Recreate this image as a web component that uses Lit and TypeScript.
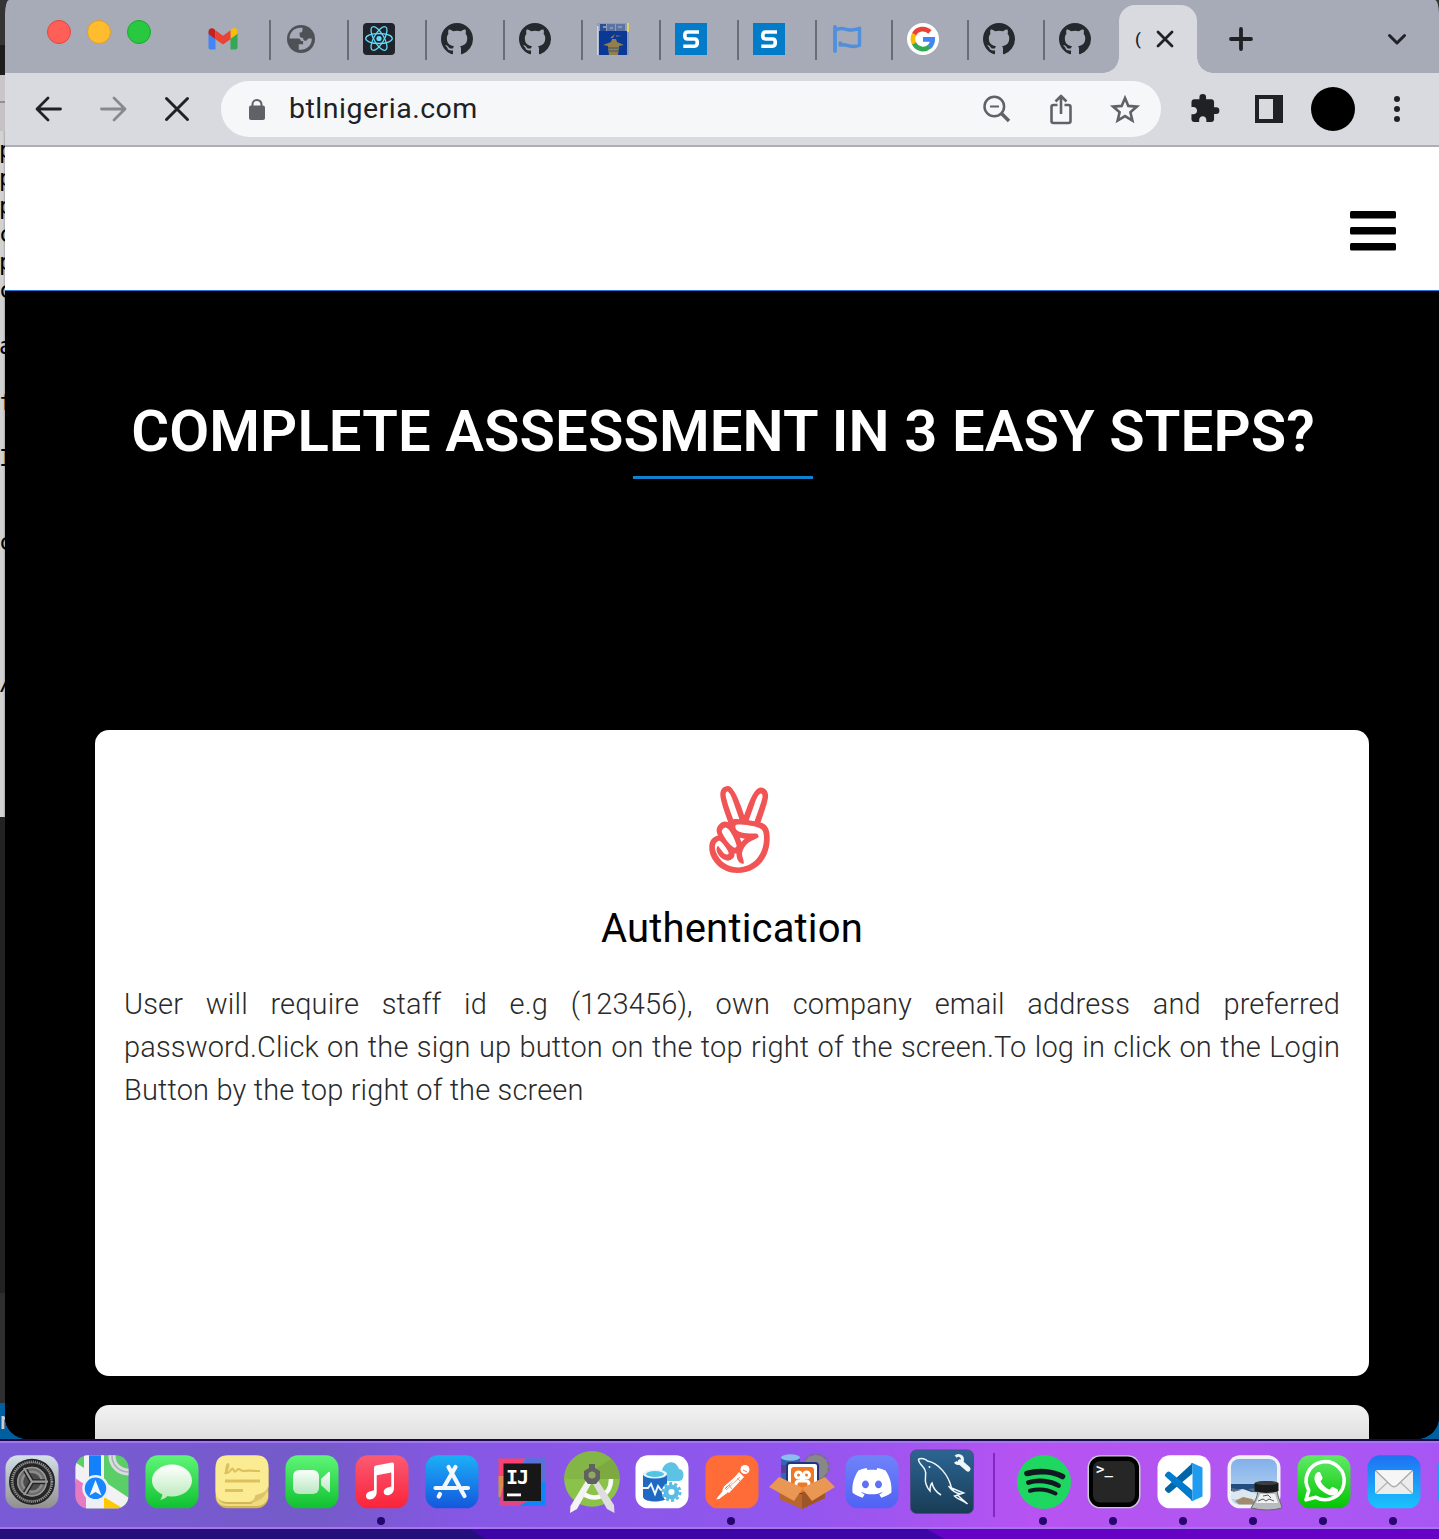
import { LitElement, html, svg, css } from "lit";
import { customElement, property } from "lit/decorators.js";

const GITHUB = svg`<path fill="#24292e" transform="scale(2)" d="M8 0C3.58 0 0 3.58 0 8c0 3.54 2.29 6.53 5.47 7.59.4.07.55-.17.55-.38 0-.19-.01-.82-.01-1.49-2.01.37-2.53-.49-2.69-.94-.09-.23-.48-.94-.82-1.13-.28-.15-.68-.52-.01-.53.63-.01 1.08.58 1.23.82.72 1.21 1.87.87 2.33.66.07-.52.28-.87.51-1.07-1.78-.2-3.64-.89-3.64-3.95 0-.87.31-1.59.82-2.15-.08-.2-.36-1.02.08-2.12 0 0 .67-.21 2.2.82.64-.18 1.32-.27 2-.27s1.36.09 2 .27c1.53-1.04 2.2-.82 2.2-.82.44 1.1.16 1.92.08 2.12.51.56.82 1.27.82 2.15 0 3.07-1.87 3.75-3.65 3.95.29.25.54.73.54 1.48 0 1.07-.01 1.93-.01 2.2 0 .21.15.46.55.38A8.01 8.01 0 0 0 16 8c0-4.42-3.58-8-8-8z"/>`;

const FAVICONS: Record<string, unknown> = {
  gmail: svg`
    <path fill="#4285f4" d="M1.5 10v14.500q0 2 2 2h5V14z"/>
    <path fill="#34a853" d="M23.500 14v12.500h5q2 0 2-2V10z"/>
    <path fill="#fbbc04" d="M23.500 8v8l7-5.200V8.500c0-3.300-3.500-4.300-5.700-2.500z"/>
    <path fill="#c5221f" d="M1.500 8.500V11l7 5.200V8L7.200 6C5 4.300 1.500 5.500 1.500 8.500z"/>
    <path fill="#ea4335" d="M8.500 16.200V7.200L16 12.800l7.500-5.600v9L16 21.500z"/>`,
  globe: svg`
    <circle cx="16" cy="16" r="14" fill="#4e5156"/>
    <path fill="#a7abb7" d="M17.500 4.800c-9-.8-13 5.400-12.900 10.600h9.100c1.900 0 1.500 2.600 3.200 2.600h1.200v3.200h-4.600v5.200c6.500 1.300 13.500-3 13.300-11h-3.200c-1.200 0-1.200 2.400-3 2.400-2.400 0-2.400-1.600-2.400-2.800-2.400 0-3.600-1.200-3.600-3V9.400h1.400c1.700 0 1.500-2.600 1.500-4.600z"/>
    <path fill="#4e5156" d="M4.500 18h6c1 0 1.300 1 1.300 2.200 0 1 .8 1.400 1.700 1.400v5.400C8 26 5 22.500 4.500 18z"/>`,
  react: svg`
    <rect width="32" height="32" rx="4" fill="#20232a"/>
    <g fill="none" stroke="#61dafb" stroke-width="1.300">
      <ellipse cx="16" cy="15.500" rx="13.300" ry="5"/>
      <ellipse cx="16" cy="15.500" rx="13.300" ry="5" transform="rotate(60 16 15.500)"/>
      <ellipse cx="16" cy="15.500" rx="13.300" ry="5" transform="rotate(120 16 15.500)"/>
    </g><circle cx="16" cy="15.500" r="2.600" fill="#61dafb"/>`,
  github: GITHUB,
  crest: svg`
    <rect width="32" height="32" fill="#8d9cba"/><rect x="2" y="8" width="28" height="24" fill="#0b3795"/>
    <path fill="#2f4f94" d="M3 1h6v7H3z"/><path fill="#5c74a4" d="M10 1h8v7h-8zM19 1h9v7h-9z"/><path fill="#8795b5" d="M6 3h3v2H6zM13 4h3v2h-3zM21 3h4v2h-4z"/>
    <path fill="#e6d257" d="M30 0h2v9h-2z"/><path fill="#c9d4e8" d="M0 3h1.500v29H0z"/>
    <path fill="#927f4b" d="M6 22l8-3 1-3h4l1 3 7 3-5 1v2l-1 7H12l-1-7v-2zM13 15l5-4-2 4z"/><path fill="#4f6291" d="M19 12l6 1-6 1z"/>
    <path stroke="#3f5473" d="M11 25h12M12 28h10"/>`,
  s: svg`
    <rect width="32" height="32" fill="#027bc9"/>
    <path fill="none" stroke="#fff" stroke-width="3.600" d="M24 9H12.500Q9.800 9 9.800 12.500T12.500 16H19.500Q22.300 16 22.300 19.600T19.500 23.200H8.300"/>`,
  flag: svg`
    <g fill="none" stroke="#4f8fde" stroke-linejoin="round"><path stroke-width="3.800" stroke-linecap="round" d="M4 4v24"/>
    <path stroke-width="3.400" d="M5 7c6-4 11 .8 16 0 3-.4 5-.9 7.500-1.700v16.900c-5 2.500-8.500 1.300-12 .3-2.700-.9-5-1-7.300-.4v-3.500"/></g>`,
  google: svg`
    <circle cx="16" cy="16" r="16" fill="#fff"/>
    <g fill="none" stroke-width="4.700"><path stroke="#ea4335" d="M7 11.400A10 10 0 0 1 22.900 9"/><path stroke="#fbbc05" d="M7.200 20.800A10 10 0 0 1 7.200 11.200"/>
    <path stroke="#34a853" d="M22.700 23.500A10 10 0 0 1 7.100 20.500"/><path stroke="#4285f4" d="M16 16.300h9.700c0 3-1 5.500-3.200 7.400"/></g>`,
};

const TABS: Array<{ icon: string; narrow?: boolean }> = [
  { icon: "gmail" }, { icon: "globe" }, { icon: "react" }, { icon: "github" },
  { icon: "github" }, { icon: "crest" }, { icon: "s" }, { icon: "s" },
  { icon: "flag", narrow: true }, { icon: "google", narrow: true },
  { icon: "github", narrow: true }, { icon: "github", narrow: true },
];

const tile = (fill: string) => svg`<rect x="8.500" y="14.300" width="53" height="53" rx="12.500" fill=${fill}/>`;
const grad = (id: string, a: string, b: string) => svg`<linearGradient id=${id} x2="0" y2="1"><stop stop-color=${a}/><stop offset="1" stop-color=${b}/></linearGradient>`;

const APPS: Record<string, unknown> = {
  settings: svg`
    <defs>${grad("set", "#d3e0e8", "#918f8e")}</defs>${tile("url(#set)")}
    <circle cx="35" cy="40.700" r="22" fill="#555"/>
    <circle cx="35" cy="40.700" r="21.500" fill="none" stroke="#222" stroke-width="3"/>
    <circle cx="35" cy="40.700" r="20" fill="none" stroke="#9a9a9a" stroke-width="2.500" stroke-dasharray="1 1.100"/>
    <circle cx="35" cy="40.700" r="16.600" fill="#6d6d6d" stroke="#252525" stroke-width="3.400"/>
    <circle cx="35" cy="40.700" r="10" fill="#4c4c4c" stroke="#8b8b8b" stroke-width="2.400"/>
    <g stroke="#242424" stroke-width="5"><path d="M35 40.700h16M35 40.700L27 27M35 40.700L27 54"/></g>
    <g stroke="#9c9c9c" stroke-width="2.200"><path d="M35 40.700h16M35 40.700L27 27M35 40.700L27 54"/></g>
    <circle cx="35" cy="40.700" r="14.200" fill="none" stroke="#999" stroke-width="1.500"/>`,
  maps: svg`
    <clipPath id="mc">${tile("#fff")}</clipPath><g clip-path="url(#mc)">
    <path fill="#5bcf67" d="M8 14h54v54H8z"/><path fill="#f2f2f4" d="M8 21l54 36v11H20L8 40z"/>
    <path fill="#e87ac2" d="M8 37l12 8v23H8z"/><path fill="#eeeef4" d="M19 45h18v23H19z"/><path fill="#ffc800" d="M37 56l20 12H37z"/>
    <path fill="#f2f2f4" d="M17 14h20v27H17z"/><path fill="#1580fb" d="M22 14h12v30H22z"/>
    <circle cx="61" cy="15" r="16" fill="none" stroke="#d9dbe1" stroke-width="7"/><circle cx="61" cy="15" r="16" fill="none" stroke="#a8b0b7" stroke-width="1.500"/>
    </g><circle cx="28.500" cy="47.300" r="12" fill="#1786ff" stroke="#e9f1f7" stroke-width="2.500"/>
    <path fill="#f4f8fb" d="M28.500 39l6 15.500-6-3.500-6 3.500z"/>`,
  messages: svg`
    <defs>${grad("grn", "#5ff578", "#10c130")}${grad("bub", "#ffffff", "#b7eab8")}</defs>${tile("url(#grn)")}
    <path fill="url(#bub)" d="M35 23.500c11 0 20 7 20 16s-9 16-20 16c-1.500 0-3-.1-4.500-.5-2 2.300-4 3.200-7.500 3.800 1.600-1.600 2.300-3.200 2.300-5.500C19 50.500 15 45.500 15 39.500c0-9 9-16 20-16z"/>`,
  notes: svg`
    <rect x="8.500" y="17" width="53" height="50.300" rx="12" fill="#d0b456"/><path fill="#f0dc7d" d="M9 50q1 13 12 13h23l17-13v7q-3 8-12 8H21Q10 65 9 56z"/>
    <path fill="#fbec94" d="M21 14.300h28q12.500 0 12.500 12.500V45c-1 8-9 16-18 16H21Q8.500 61 8.500 49V27Q8.500 14.300 21 14.300z"/>
    <path fill="#dcc46a" d="M61.500 44c-2 7-5 8-13 10-1 5-4 7-9 7.500 12 1 21-6 22-17.500z"/>
    <g stroke="#dcc15e" fill="none" stroke-width="2.800"><path d="M18 40h35M18 49.500h18"/><path stroke-width="2.200" d="M18 33c3-5 4-10 3-10s-3 9-1 9c3 0 5-6 6-4s2 4 4 1 4 2 7 1 4-.3 16 0"/></g>`,
  facetime: svg`
    <defs>${grad("ftb", "#5ff578", "#10c130")}${grad("ft", "#f9fffa", "#b9e7c0")}</defs>${tile("url(#ftb)")}
    <rect x="16" y="29" width="26" height="24" rx="6" fill="url(#ft)"/><path fill="url(#ft)" d="M44 38l7.500-7q1.500-1 1.500 1v18q0 2-1.500 1L44 44z"/>`,
  music: svg`
    <defs>${grad("mus", "#fb5b74", "#fa2339")}</defs>${tile("url(#mus)")}
    <path fill="#fff" d="M27 27q0-2 2-2.400l16-3q2-.3 2 1.500V47c0 8-10 9.500-10.300 4 0-4 5-4.700 7.600-5.500V31.500L29.700 34.300V51c0 8-10.500 10-10.700 4 0-4.500 5.500-4.700 8-5.700z"/>`,
  appstore: svg`
    <defs>${grad("as", "#1cb0f6", "#1357dd")}</defs>${tile("url(#as)")}
    <g stroke="#f3f8fd" stroke-width="4.200" stroke-linecap="round"><path d="M38.500 26L27 46M31.500 26L47.500 55M18.500 47h21M46 47h5M23 53l-1.300 2.500"/></g>`,
  intellij: svg`
    <path fill="#4d7be0" d="M11.500 17.500h47V65h-47z"/>
    <path fill="#fc4071" d="M11.500 17.500h27L22 41H11.500z"/><path fill="#5871d8" d="M38 17.500h20.500V44H48z"/><path fill="#0e86fb" d="M30 65l15-24h13.500v24z"/>
    <path fill="#d98a52" d="M11.500 35H20v21h-8.500z"/><path fill="#e34387" d="M16 46h22l4 14-11 5H11.500z"/>
    <rect x="16.500" y="22.500" width="37.500" height="37.500" fill="#171717"/><rect x="20" y="52.500" width="14" height="2.800" fill="#fff"/>
    <text x="19" y="43" class="ij">IJ</text>`,
  studio: svg`
    <circle cx="35" cy="38" r="27.800" fill="#8bc34a"/><path fill="#7caa41" d="M7.200 38a27.800 27.800 0 0 1 55.600 0z"/><path fill="#84b547" d="M7.200 38a27.800 27.800 0 0 1 47-20L35 30v8z"/>
    <path d="M54 38c0 21-22 22-29 13" fill="none" stroke="#fafafa" stroke-width="4.500"/>
    <path fill="#f3f3f3" d="M30 38l5 3-15 27-7 4 .5-7z"/><path fill="#dedede" d="M40 38l-5 3 15 27 7.500 4-.5-8z"/>
    <path fill="#616161" d="M32 23h6v4l5 3v8l-4 5h-8l-4-5v-8l5-3z"/><circle cx="35" cy="34" r="3.600" fill="#8fa961"/>`,
  azure: svg`
    ${tile("#fff")}
    <path fill="#5cc3e4" d="M34 40c-5-1-5-9 1-10 1-9 13-13 17-2 6 0 6 12 0 12z"/>
    <path fill="#1f69c3" d="M16 32v24c1 6 23 6 24 0V32z"/><ellipse cx="28" cy="33" rx="12" ry="4.500" fill="#e9f5fb"/><ellipse cx="28" cy="33" rx="9" ry="3" fill="#50c6e4"/>
    <path d="M16 47h5l3-4 4 10 3-8 3 4h5" fill="none" stroke="#eef6ff" stroke-width="2"/>
    <circle cx="44.500" cy="51" r="8.800" fill="none" stroke="#fff" stroke-width="2"/><circle cx="44.500" cy="51" r="8.500" fill="none" stroke="#58bce5" stroke-width="2.800" stroke-dasharray="3 2.340"/><circle cx="44.500" cy="51" r="5.300" fill="#fff" stroke="#58bce5" stroke-width="4.500"/>`,
  postman: svg`
    ${tile("#ff6c37")}
    <circle cx="48" cy="28.500" r="4.500" fill="#fff"/><path d="M46 29l4 2" stroke="#ff6c37"/>
    <path fill="#fff" d="M42 31l5 5-15 16-5-3zM28 47l3 4-9 7-3 .5z"/><path stroke="#fff" stroke-width="2" d="M43 33L28 46l-2 4M30 51l-9 6"/>
    <path stroke="#ff6c37" stroke-width=".7" d="M43 36L29 49M40 37l3 3M32 44l3 4"/>`,
  xampp: svg`
    <rect x="14" y="14" width="19" height="25" rx="5" fill="#3265b4"/><ellipse cx="23.500" cy="16.500" rx="9.500" ry="3.300" fill="#8abcec"/><path fill="#5c3c9b" d="M14 24h19v8H14z"/>
    <circle cx="49" cy="26" r="12" fill="none" stroke="#71737a" stroke-width="3.500" stroke-dasharray="4 2.300"/><circle cx="49" cy="26" r="8" fill="none" stroke="#888" stroke-width="8"/>
    <rect x="20" y="22" width="31" height="31" rx="3" fill="#fff" stroke="#23337e" stroke-width="2"/>
    <rect x="24" y="26" width="23" height="26" rx="3" fill="#ed7825"/>
    <g fill="none" stroke="#fff" stroke-width="3"><circle cx="31.500" cy="34" r="3"/><circle cx="39.500" cy="34" r="3"/><path d="M33 37h5M29 46v-3q0-3 3-3h7q3 0 3 3v3"/></g>
    <path fill="#b8662d" d="M12 47l23 6 23-6v10L35 68 12 58z"/><path fill="#9e5527" d="M35 51l23-4v10L35 68z"/>
    <path fill="#e99753" d="M2 46l10-10 24 11-9 13zM68 46L58 36 35 47l10 13z"/>`,
  discord: svg`
    <defs>${grad("dis", "#7083fa", "#5062f4")}</defs>${tile("url(#dis)")}
    <path fill="#fff" transform="translate(15.400 22.300) scale(1.630)" d="M20.317 4.3698a19.7913 19.7913 0 00-4.8851-1.5152.0741.0741 0 00-.0785.0371c-.211.3753-.4447.8648-.6083 1.2495-1.8447-.2762-3.68-.2762-5.4868 0-.1636-.3933-.4058-.8742-.6177-1.2495a.077.077 0 00-.0785-.037 19.7363 19.7363 0 00-4.8852 1.515.0699.0699 0 00-.0321.0277C.5334 9.0458-.319 13.5799.0992 18.0578a.0824.0824 0 00.0312.0561c2.0528 1.5076 4.0413 2.4228 5.9929 3.0294a.0777.0777 0 00.0842-.0276c.4616-.6304.8731-1.2952 1.226-1.9942a.076.076 0 00-.0416-.1057c-.6528-.2476-1.2743-.5495-1.8722-.8923a.077.077 0 01-.0076-.1277c.1258-.0943.2517-.1923.3718-.2914a.0743.0743 0 01.0776-.0105c3.9278 1.7933 8.18 1.7933 12.0614 0a.0739.0739 0 01.0785.0095c.1202.099.246.1981.3728.2924a.077.077 0 01-.0066.1276 12.2986 12.2986 0 01-1.873.8914.0766.0766 0 00-.0407.1067c.3604.698.7719 1.3628 1.225 1.9932a.076.076 0 00.0842.0286c1.961-.6067 3.9495-1.5219 6.0023-3.0294a.077.077 0 00.0313-.0552c.5004-5.177-.8382-9.6739-3.5485-13.6604a.061.061 0 00-.0312-.0286zM8.02 15.3312c-1.1825 0-2.1569-1.0857-2.1569-2.419 0-1.3332.9555-2.4189 2.157-2.4189 1.2108 0 2.1757 1.0952 2.1568 2.419 0 1.3332-.9555 2.4189-2.1569 2.4189zm7.9748 0c-1.1825 0-2.1569-1.0857-2.1569-2.419 0-1.3332.9554-2.4189 2.1569-2.4189 1.2108 0 2.1757 1.0952 2.1568 2.419 0 1.3332-.946 2.4189-2.1568 2.4189Z"/>`,
  mysql: svg`
    <defs>${grad("sql", "#2c6593", "#193c55")}</defs>
    <rect x="3.500" y="9" width="63" height="63.500" rx="6" fill="url(#sql)" stroke="#4b4c86"/>
    <path d="M11.500 18c3-1.500 7 0 9 2 11 2 21 14 24 27l12 5-6 2 10 9c-4-4-9-4-13-8l6-2c-6-1-9-4-12-8M11.500 18c0 5 5 7 6.500 11 2 4-1 9 1 14 1 3 2 5 4 7 0-3 0-6 2-8 1 5 4 9 9 12" fill="none" stroke="#f0f7fb" stroke-width="1.500"/>
    <circle cx="22.500" cy="26" r="1" fill="#f0f7fb"/>
    <path d="M53 21l8 7" stroke="#f0f7fb" stroke-width="5" stroke-linecap="round"/><circle cx="51.500" cy="18.500" r="4" fill="none" stroke="#f0f7fb" stroke-width="3" stroke-dasharray="19 6" transform="rotate(-135 51.500 18.500)"/>`,
  spotify: svg`
    <circle cx="35" cy="41" r="27" fill="#1ed760"/><g fill="none" stroke="#101820" stroke-linecap="round">
    <path stroke-width="5.600" d="M18 32.500c12-3.500 26-2 35.500 3"/><path stroke-width="4.800" d="M19.500 41.500c10-3 22-1.500 30 3"/><path stroke-width="4" d="M21 49.700c9-2.300 18-1.300 25.500 2.800"/></g>`,
  terminal: svg`
    ${tile("#c6cdd0")}<rect x="10" y="15.500" width="50" height="50.500" rx="11.500" fill="#000"/><rect x="14" y="20" width="42" height="41.500" rx="7" fill="#262626"/>
    <text x="17" y="33" class="term">&gt;_</text>`,
  vscode: svg`
    ${tile("#fff")}
    <path fill="#0065a9" d="M43.500 22v10.500L21 51.500q-1.500 1-3-.3l-1.600-1.600q-1.200-1.300 0-2.600z"/>
    <path fill="#007acc" d="M43.500 60V49.500L21 31q-1.500-1-3 .2l-1.600 1.700q-1.200 1.200 0 2.500z"/>
    <path fill="#1f9cf0" d="M43.500 22l10 4.500V55.500L43.500 60q-1 .3-2-.5 2 .2 2-2V25q0-2.300-2-2.200 1-1 2-.8z"/>`,
  preview: svg`
    <defs>${grad("sky", "#83b0ea", "#bdd9f2")}</defs>${tile("#f1f2f5")}
    <rect x="12" y="18" width="46" height="45.500" rx="8" fill="url(#sky)"/><path fill="#244c7e" d="M12 43h46v8H12z"/><path fill="#dce7ef" d="M12 50l12-2 14 5 20-3v8H12z"/><path fill="#5a7289" d="M12 47l10 2-8 2zM29 48l9-1-3 4z"/><path fill="#a08b70" d="M16 60l8-4 9 2 5 5.500H20z"/>
    <path fill="#b9bcbe" stroke="#666" d="M39 50h19c1 7 4 12 5 17q-14 4-31 0c4-6 6-10 7-17z"/><path fill="#f0f1f1" d="M41 53h15l3 9H37z"/>
    <path d="M44 55l5-1 3 3M39 60l5-2 3 2 3-2 5 2" stroke="#555" fill="none"/><path fill="#191a1b" d="M35.500 42q12-4 24 0v8q-12 4-24 0z"/><ellipse cx="47.500" cy="42" rx="11.500" ry="2" fill="#3c3d3e"/>`,
  whatsapp: svg`
    <defs>${grad("wa", "#61ea68", "#03c500")}</defs>${tile("url(#wa)")}
    <path fill="none" stroke="#fff" stroke-width="3.600" stroke-linejoin="round" d="M17 58.800l2.800-9.500a19 19 0 1 1 7.200 7z"/>
    <path fill="#fff" d="M27.500 32c1.200-1.200 3.500-1.200 4 0l2 4.700c.4 1-1 2.300-2 3.500 2 4 5 6.700 9 8.300 1.400-1 2-3 3.500-2.500l4.500 2.200c1 .7.500 3-.5 4.300-2 2.200-5.500 2.500-9 1-7-3-12-8.500-13.300-14-.7-3 0-5.700 1.800-7.500z"/>`,
  mail: svg`
    <defs>${grad("ml", "#2070f2", "#19c4fd")}</defs>${tile("url(#ml)")}
    <rect x="16" y="29" width="38" height="24" rx="2.500" fill="#ececec"/><path d="M17 52l13-12M53 52L40 40" stroke="#b4b4b4" stroke-width="1.200"/><path d="M17 30l15 14.500q3 2.500 6 0L53 30" fill="#f6f6f6" stroke="#a9a9a9" stroke-width="1.300"/>`,
  partial: svg`${tile("#1d9bf5")}`,
};

const DOCK_LEFT: Array<[string, boolean]> = [
  ["settings", false], ["maps", false], ["messages", false], ["notes", false], ["facetime", false],
  ["music", true], ["appstore", false], ["intellij", false], ["studio", false], ["azure", false],
  ["postman", true], ["xampp", false], ["discord", false], ["mysql", false],
];
const DOCK_RIGHT: Array<[string, boolean]> = [
  ["spotify", true], ["terminal", true], ["vscode", true], ["preview", true], ["whatsapp", true], ["mail", true], ["partial", false],
];

@customElement("browser-tabs")
class BrowserTabs extends LitElement {
  static styles = css`
    :host { display: flex; height: 73px; background: #a7abb7; }
    .lights { display: flex; gap: 16px; width: 144px; padding: 20px 0 0 42px; }
    .light { width: 24px; height: 24px; border-radius: 50%; box-sizing: border-box; border: 1px solid; }
    .red { background: #ff5f57; border-color: #e1483f; }
    .amber { background: #febc2e; border-color: #dfa023; }
    .green { background: #28c840; border-color: #1aab29; }
    .tab { box-sizing: border-box; width: 78px; height: 40px; margin-top: 20px; padding: 3px 0 0 14px; border-left: 2px solid #6a6d73; }
    .tab.narrow { width: 76px; }
    .tab.first { border-color: transparent; }
    svg { display: block; }
    .active { position: relative; display: flex; align-items: center; box-sizing: border-box; width: 78px; height: 68px; margin-top: 5px; padding-left: 16px; background: #d9dadf; border-radius: 16px 16px 0 0; }
    .active::before, .active::after { content: ""; position: absolute; bottom: 0; width: 16px; height: 16px; }
    .active::before { left: -16px; background: radial-gradient(circle at 0 0, transparent 15.5px, #d9dadf 16px); }
    .active::after { right: -16px; background: radial-gradient(circle at 100% 0, transparent 15.5px, #d9dadf 16px); }
    .title { width: 6px; overflow: hidden; font: 500 17px/30px Roboto, sans-serif; color: #202124; margin-right: 7px; }
    .plus { margin: 25px 0 0 30px; }
    .chev { margin: 29px 30px 0 auto; }
  `;
  render() {
    return html`
      <div class="lights"><span class="light red"></span><span class="light amber"></span><span class="light green"></span></div>
      ${TABS.map((t, i) => html`<div class="tab ${t.narrow ? "narrow" : ""} ${i === 0 ? "first" : ""}"><svg width="32" height="32">${FAVICONS[t.icon]}</svg></div>`)}
      <div class="active"><span class="title">(</span>
        <svg width="34" height="34" fill="none" stroke="#202124" stroke-width="2.8" stroke-linecap="round"><path d="M10 10l14 14M24 10L10 24"/></svg>
      </div>
      <svg class="plus" width="28" height="28" fill="none" stroke="#202124" stroke-width="3.800" stroke-linecap="round"><path d="M14 4v20M4 14h20"/></svg>
      <svg class="chev" width="24" height="20" fill="none" stroke="#202124" stroke-width="3" stroke-linecap="round" stroke-linejoin="round"><path d="M4.500 6.500l7.500 7.500 7.500-7.500"/></svg>`;
  }
}

@customElement("browser-toolbar")
class BrowserToolbar extends LitElement {
  static styles = css`
    :host { display: flex; align-items: center; height: 72px; padding-left: 12px; background: #d9dadf; border-bottom: 2px solid #aeafb5; }
    svg { display: block; width: 64px; height: 44px; flex: none; }
    .address { display: flex; align-items: center; box-sizing: border-box; width: 940px; height: 56px; margin: 0 12px; padding: 0 4px 0 4px; border-radius: 28px; background: #f6f7f9; }
    .url { flex: 1; margin-bottom: 1px; font: 28.500px/40px Roboto, sans-serif; letter-spacing: 0.5px; color: #202124; }
    .avatar { width: 44px; height: 44px; margin: 0 10px; border-radius: 50%; background: #000; }
  `;
  render() {
    return html`
      <svg fill="none" stroke="#202124" stroke-width="2.800" stroke-linecap="round" stroke-linejoin="round"><path d="M43.500 22H20.500M31 11L20 22l11 11"/></svg>
      <svg fill="none" stroke="#88898f" stroke-width="2.800" stroke-linecap="round" stroke-linejoin="round"><path d="M20.500 22H43.500M33 11l11 11-11 11"/></svg>
      <svg fill="none" stroke="#202124" stroke-width="3" stroke-linecap="round"><path d="M21.500 11.500l21 21M42.500 11.500l-21 21"/></svg>
      <div class="address">
        <svg><rect x="24" y="18.500" width="16" height="14.500" rx="2" fill="#5f6368"/><path fill="none" stroke="#5f6368" stroke-width="2" d="M27.500 19v-1.500a4.500 4.500 0 0 1 9 0V19"/></svg>
        <span class="url">btlnigeria.com</span>
        <svg fill="none" stroke="#5f6368" stroke-width="2.500"><circle cx="29.300" cy="19.500" r="9.800"/><path stroke-width="2" d="M25 19.500h9"/><path stroke-width="3.600" d="M36 26l8 8"/></svg>
        <svg fill="none" stroke="#5f6368" stroke-width="2.600" stroke-linejoin="round"><path d="M28.500 18h-4q-2 0-2 2v14q0 2 2 2h15q2 0 2-2V20q0-2-2-2h-4M32 27V9.500M26.500 14.500L32 9l5.500 5.500"/></svg>
        <svg fill="none" stroke="#5f6368" stroke-width="2.600"><path d="M32 11l3.300 7.900 8.600.7-6.500 5.600 2 8.400-7.400-4.500-7.400 4.500 2-8.400-6.500-5.600 8.600-.7z"/></svg>
      </div>
      <svg><path fill="#202124" transform="translate(15.800 5.700) scale(1.330)" d="M20.500 11H19V7c0-1.100-.9-2-2-2h-4V3.500a2.500 2.500 0 0 0-5 0V5H4c-1.100 0-1.990.9-1.990 2v3.800H3.500c1.490 0 2.700 1.210 2.700 2.700s-1.210 2.700-2.700 2.700H2V20c0 1.100.9 2 2 2h3.800v-1.500c0-1.490 1.210-2.700 2.700-2.700s2.700 1.210 2.700 2.700V22H17c1.100 0 2-.9 2-2v-4h1.500a2.500 2.500 0 0 0 0-5z"/></svg>
      <svg><path fill="#202124" fill-rule="evenodd" d="M18 8h28v28H18zM22 12v20h14V12z"/></svg>
      <span class="avatar"></span>
      <svg fill="#202124"><circle cx="32" cy="12" r="3"/><circle cx="32" cy="22" r="3"/><circle cx="32" cy="32" r="3"/></svg>`;
  }
}

@customElement("assessment-page")
class AssessmentPage extends LitElement {
  static styles = css`
    :host { display: flex; flex-direction: column; flex: 1; min-height: 0; overflow: hidden; background: #000; font-family: Roboto, sans-serif; }
    .nav { flex: none; display: flex; justify-content: flex-end; align-items: flex-start; box-sizing: border-box; height: 144px; padding: 64px 43px 0 0; background: #fff; border-bottom: 1px solid #2a6fd6; }
    svg { display: block; }
    .head { flex: none; height: 439px; display: flex; flex-direction: column; align-items: center; }
    h1 { margin: 105px 0 0 2px; font-size: 58px; line-height: 70px; font-weight: 600; letter-spacing: 0.1px; color: #fff; white-space: nowrap; }
    .rule { width: 180px; height: 3px; margin: 10px 0 0 2px; background: #0f82cf; }
    .card { flex: none; box-sizing: border-box; width: 1274px; margin-left: 90px; border-radius: 14px; background: #fff; }
    .main { height: 646px; padding: 56px 29px 0; display: flex; flex-direction: column; align-items: center; }
    .hand { margin-left: 15px; }
    h2 { margin: 31px 0 0; font-size: 40px; line-height: 50px; font-weight: 400; letter-spacing: 0.17px; color: #000; }
    p { margin: 29px 0 0; align-self: stretch; font-size: 29px; line-height: 43.200px; font-weight: 300; letter-spacing: 0.15px; color: #2a2a2a; text-align: justify; }
    .next { height: 80px; margin-top: 29px; background: linear-gradient(#f3f3f3, #dedede 36px); }
  `;
  render() {
    return html`
      <div class="nav"><svg width="46" height="40"><rect width="46" height="7.500" rx="1.500"/><rect y="16" width="46" height="7.500" rx="1.500"/><rect y="32" width="46" height="7.500" rx="1.500"/></svg></div>
      <div class="head"><h1>COMPLETE ASSESSMENT IN 3 EASY STEPS?</h1><div class="rule"></div></div>
      <div class="card main">
        <svg class="hand" width="61" height="87" viewBox="46 0 356 512"><path fill="#f15455" d="M347.100 215.400c11.700-32.600 45.400-126.900 45.400-157.100 0-26.600-15.700-48.900-43.700-48.900-44.600 0-84.600 131.700-97.100 163.100C242 144 196.600 0 156.600 0c-31.100 0-45.700 22.900-45.700 51.700 0 35.300 34.200 126.800 46.600 162-6.300-2.300-13.100-4.300-20-4.300-23.400 0-48.300 29.100-48.300 52.600 0 8.900 4.900 21.400 8 29.700-36.900 10-51.100 34.600-51.100 71.700C46 435.600 114.400 512 210.600 512c118 0 191.400-88.600 191.400-202.900 0-43.100-6.900-82-54.900-93.700zM311.700 108c4-12.300 21.100-64.300 37.100-64.300 8.600 0 10.900 8.900 10.900 16 0 19.100-38.600 124.600-47.100 148l-34-6 33.100-93.700zM142.300 48.300c0-11.900 14.500-45.700 46.300 47.100l34.600 100.300c-15.600-1.300-27.700-3-35.400 1.400-10.900-28.800-45.500-119.700-45.500-148.800zM140 244c29.300 0 67.100 94.600 67.100 107.400 0 5.100-4.900 11.400-10.600 11.400-20.900 0-76.900-76.900-76.900-97.700.1-7.700 12.700-21.100 20.400-21.100zm184.300 186.300c-29.100 32-66.300 48.600-109.700 48.600-59.400 0-106.300-32.600-128.900-88.300-17.100-43.400 3.800-68.300 20.600-68.300 11.400 0 54.300 60.300 54.300 73.100 0 4.900-7.700 8.300-11.700 8.300-16.100 0-22.400-15.500-51.100-51.400-29.700 29.700 20.500 86.900 58.300 86.900 26.100 0 43.100-24.200 38-42 3.700 0 8.300.3 11.700-.6 1.100 27.100 9.100 59.400 41.700 61.700 0-.9 2-7.100 2-7.400 0-17.400-10.600-32.600-10.600-50.300 0-28.300 21.700-55.700 43.700-71.700 8-6 17.700-9.700 27.100-13.100 9.700-3.700 20-8 27.400-15.400-1.100-11.200-5.700-21.100-16.900-21.100-27.700 0-120.600 4-120.600-39.700 0-6.700.1-13.100 17.400-13.100 32.300 0 114.300 8 138.300 29.100 18.100 16.100 24.300 113.200-31 174.700zm-98.600-126c9.700 3.100 19.700 4 29.700 6-7.400 5.400-14 12-20.300 19.100-2.800-8.500-6.200-16.800-9.400-25.100z"/></svg>
        <h2>Authentication</h2>
        <p>User will require staff id e.g (123456), own company email address and preferred password.Click on the sign up button on the top right of the screen.To log in click on the Login Button by the top right of the screen</p>
      </div>
      <div class="card next"></div>`;
  }
}

@customElement("dock-app")
class DockApp extends LitElement {
  @property() name = "";
  @property({ type: Boolean }) running = false;
  static styles = css`
    :host { display: block; flex: none; width: 70px; height: 84px; }
    svg { display: block; margin-top: -2px; overflow: visible; }
    .ij { font: bold 20px "DejaVu Sans Mono", monospace; fill: #fff; letter-spacing: -1px; }
    .term { font: bold 14px "DejaVu Sans Mono", monospace; fill: #fff; }
    .dot { fill: #26056e; }
  `;
  render() {
    return html`<svg width="70" height="88">${APPS[this.name]}${this.running ? svg`<circle class="dot" cx="34" cy="80" r="4"/>` : ""}</svg>`;
  }
}

@customElement("app-root")
class AppRoot extends LitElement {
  static styles = css`
    :host { display: flex; flex-direction: column; width: 1439px; height: 1539px; overflow: hidden; background: #1b0849; }
    .desk { display: flex; flex: none; height: 1439px; background: #00609f; }
    .behind { flex: none; width: 5px; height: 1439px; overflow: hidden; white-space: nowrap; color: #000; font: 23px/28px "DejaVu Sans Mono", monospace; }
    .dark { height: 45px; background: #353535; }
    .darker { height: 30px; background: #1d1d1d; }
    .bar { height: 26px; background: #c9c5c8; }
    .bar2 { height: 28px; border-top: 2px solid #939094; background: #c5c1c5; }
    .sheet { height: 686px; background: linear-gradient(90deg, #d2d2d2 60%, #aaa); }
    .line { height: 28px; padding-top: 5px; margin-bottom: -5px; margin-left: -1px; }
    .shade { height: 476px; background: #222; }
    .shade2 { height: 110px; background: #2e2e2e; }
    .blue { color: #ccc; font-family: Roboto, sans-serif; font-weight: 500; line-height: 38px; }
    .window { display: flex; flex-direction: column; flex: 1; min-width: 0; overflow: hidden; border-radius: 4px 4px 22px 22px / 14px 14px 22px 22px; background: #000; }
    .back { display: flex; flex: 1; min-width: 0; background: linear-gradient(#333 700px, #005f9e 701px); }
    .dock { display: flex; flex: none; height: 84px; margin-top: 2px; border: 2px solid #a575ee; border-left: 0; border-right: 0; background: linear-gradient(90deg, #7a5bd6, #755ac9 22%, #8657e4 32%, #9156ee 55%, #b753f2 72%, #b156f1 85%, #a756f5); }
    .first { display: flex; margin-left: -3px; }
    .sep { flex: none; width: 2px; height: 64px; margin: 10px 14px 0 16px; background: #8326c6; }
    .wallpaper { display: block; flex: none; width: 1439px; height: 10px; background: #250f7a; }
  `;
  render() {
    const lines = ["p", "p", "p", "c", "p", "c", "", "a", "", "f", "", "I", "", "", "c", "", "", "", "", "/"];
    const app = ([name, on]: [string, boolean]) => html`<dock-app .name=${name} ?running=${on}></dock-app>`;
    return html`
      <div class="desk">
        <div class="behind">
          <div class="dark"></div><div class="darker"></div><div class="bar"></div><div class="bar2"></div>
          <div class="sheet">${lines.map((l) => html`<div class="line">${l}</div>`)}</div>
          <div class="shade"></div><div class="shade2"></div><div class="blue">r</div>
        </div>
        <div class="back"><div class="window">
          <browser-tabs></browser-tabs>
          <browser-toolbar></browser-toolbar>
          <assessment-page></assessment-page>
        </div></div>
      </div>
      <div class="dock">
        <div class="first">${DOCK_LEFT.map(app)}</div>
        <div class="sep"></div>
        ${DOCK_RIGHT.map(app)}
      </div>
      <svg class="wallpaper"><path fill="#3d05a5" d="M470 0H1439V10H485z"/><path fill="#6602c4" d="M927 0H1439V10H944z"/></svg>`;
  }
}
